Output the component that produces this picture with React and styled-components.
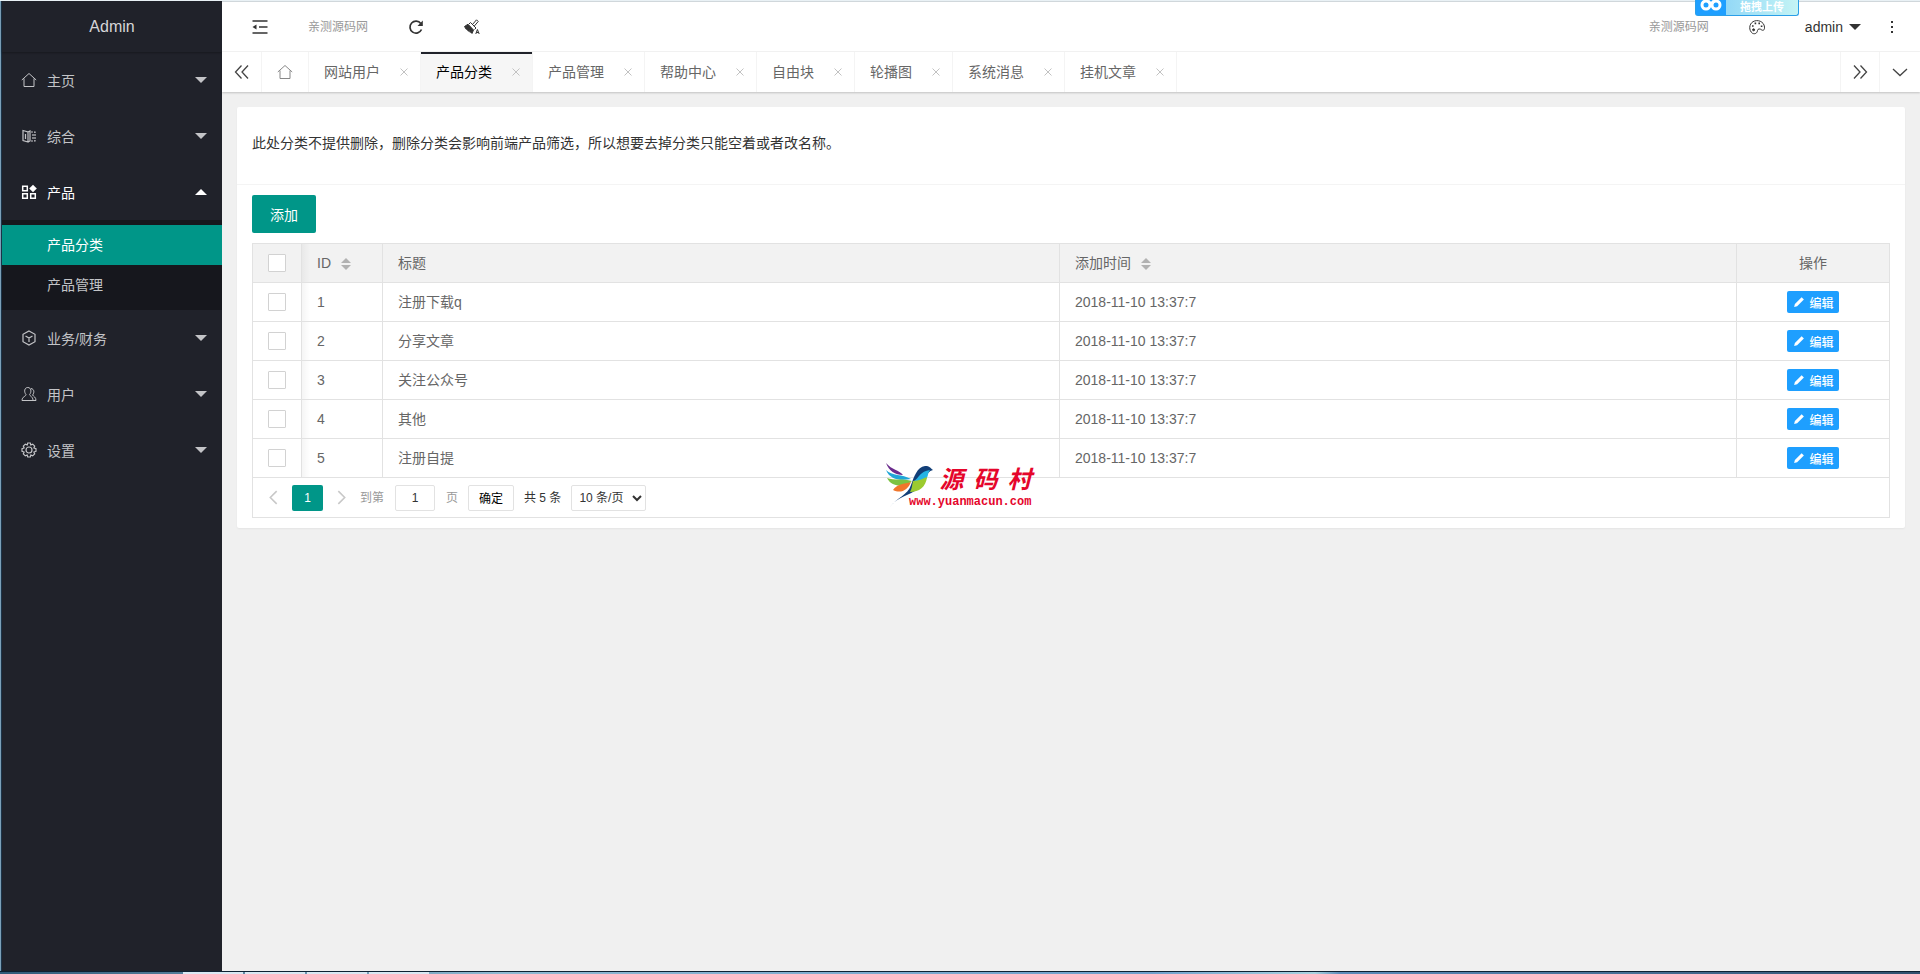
import styled, {createGlobalStyle} from "styled-components";
import {useState} from "react";

const GlobalStyle = createGlobalStyle`
    * {
      box-sizing: border-box;
    }
    body {
      margin: 0;
      background-color: #f0f0f0;
      color: #333;
      font: 14px/24px "Liberation Sans", "Noto Sans CJK SC", sans-serif;
    }
    button, input, select {
      font-family: inherit;
    }
    a {
      color: inherit;
      text-decoration: none;
    }
    ul {
      list-style: none;
      margin: 0;
      padding: 0;
    }
`

const Page = styled.div`
    display: flex;
    flex-direction: column;
    min-height: 100vh;
    border-top: 1px solid #e9f1f5;
`
const Body = styled.div`
    flex: 1;
    display: flex;
    border-left: 1px solid #7ba0b8;
`
const Side = styled.aside`
    flex: none;
    width: 221px;
    border-top: 1px solid #20222a;
    border-left: 1px solid #1b3348;
    background-color: #20222a;
    color: #c3c4c7;
`
const Logo = styled.div`
    height: 50px;
    line-height: 50px;
    font-size: 16px;
    text-align: center;
    color: #d6d6d8;
    box-shadow: 0 1px 2px rgba(0, 0, 0, .3);
`
const MenuButton = styled.button`
    display: flex;
    align-items: center;
    width: 100%;
    height: 56px;
    padding: 0 15px 0 19px;
    border: 0;
    background: none;
    color: ${(props) => props.$open ? "#fff" : "#c3c4c7"};
    font-size: 14px;
    cursor: pointer;
    svg {
      flex: none;
      margin-right: 10px;
    }
`
const Caret = styled.span`
    margin-left: auto;
    border: 6px solid transparent;
    border-width: ${(props) => props.$up ? "0 6px 6px" : "6px 6px 0"};
    border-top-color: currentColor;
    border-bottom-color: currentColor;
`
const SubMenu = styled.ul`
    padding: 5px 0;
    background-color: #16171d;
`
const SubLink = styled.a`
    display: block;
    height: 40px;
    padding-left: 45px;
    line-height: 40px;
    color: ${(props) => props.$active ? "#fff" : "#c3c4c7"};
    background-color: ${(props) => props.$active && "#009688"};
`
const Main = styled.div`
    flex: 1;
    min-width: 0;
`
const Header = styled.header`
    display: flex;
    justify-content: space-between;
    height: 51px;
    padding-left: 10px;
    border-top: 1px solid #d0d7db;
    border-bottom: 1px solid #f4f4f4;
    background-color: #fff;
`
const Tools = styled.div`
    display: flex;
    align-items: center;
`
const Tool = styled.button`
    display: flex;
    align-items: center;
    gap: 6px;
    height: 100%;
    padding: 0 ${(props) => props.$tight ? "3px" : "20px"} 0 20px;
    border: 0;
    background: none;
    color: #333;
    font-size: 14px;
    cursor: pointer;
`
const SiteLink = styled.a`
    padding: 0 20px;
    font-size: 12px;
    color: #999;
`
const TabBar = styled.nav`
    display: flex;
    height: 40px;
    background-color: #fff;
    box-shadow: 0 1px 2px rgba(0, 0, 0, .2);
`
const TabControl = styled.button`
    display: flex;
    align-items: center;
    justify-content: center;
    width: ${(props) => props.$wide ? "47px" : "40px"};
    padding: 0;
    border: 0;
    border-right: ${(props) => props.$last ? "0" : "1px solid #f4f4f4"};
    border-left: ${(props) => props.$divider ? "1px solid #f4f4f4" : "0"};
    background: none;
    color: ${(props) => props.$wide ? "#888" : "#444"};
`
const Tabs = styled.ul`
    flex: 1;
    display: flex;
`
const Tab = styled.li`
    display: flex;
    align-items: center;
    padding: 0 12px 0 15px;
    border-right: 1px solid #f4f4f4;
    color: ${(props) => props.$active ? "#000" : "#666"};
    background-color: ${(props) => props.$active && "#f6f6f6"};
    box-shadow: ${(props) => props.$active && "inset 0 2px #20222a"};
`
const Close = styled.button`
    display: flex;
    margin-left: 20px;
    padding: 0;
    border: 0;
    background: none;
    color: #c2c2c2;
`
const Card = styled.main`
    margin: 15px;
    background-color: #fff;
    border-radius: 2px;
    box-shadow: 0 1px 2px rgba(0, 0, 0, .05);
`
const Notice = styled.div`
    padding: 24px 15px 29px;
    border-bottom: 1px solid #f4f4f4;
`
const CardBody = styled.div`
    padding: 10px 15px 10px;
`
const AddButton = styled.button`
    display: block;
    height: 38px;
    margin-bottom: 10px;
    padding: 0 18px;
    border: 0;
    border-radius: 2px;
    background-color: #009688;
    color: #fff;
    font-size: 14px;
`
const TableBox = styled.div`
    border: 1px solid #e2e2e2;
`
const Table = styled.table`
    width: 100%;
    table-layout: fixed;
    border-collapse: separate;
    border-spacing: 0;
    color: #666;
    thead {
      background-color: #f2f2f2;
    }
`
const Cell = styled.td`
    width: ${(props) => props.$width};
    height: 39px;
    padding: 0 ${(props) => props.$center ? "0" : "15px"};
    border-bottom: 1px solid #e2e2e2;
    border-right: ${(props) => props.$last ? "0" : "1px solid #e2e2e2"};
    background-image: ${(props) => props.$shade && "linear-gradient(to right, rgba(0, 0, 0, .04), transparent 8px)"};
    font-weight: 400;
    line-height: 20px;
    text-align: ${(props) => props.$center ? "center" : "left"};
`
const Check = styled.input`
    appearance: none;
    display: block;
    width: 18px;
    height: 18px;
    margin: 0 auto;
    border: 1px solid #d2d2d2;
    border-radius: 1px;
    background-color: #fff;
    &:checked {
      background-color: #009688;
      border-color: #009688;
    }
`
const Sort = styled.button`
    display: inline-flex;
    flex-direction: column;
    gap: 2px;
    margin-left: 10px;
    padding: 0;
    border: 0;
    background: none;
    color: #b2b2b2;
    vertical-align: middle;
`
const SortArrow = styled.span`
    border: 5px solid transparent;
    border-width: ${(props) => props.$up ? "0 5px 5px" : "5px 5px 0"};
    border-top-color: currentColor;
    border-bottom-color: currentColor;
`
const EditButton = styled.button`
    display: inline-flex;
    align-items: center;
    gap: 4px;
    height: 22px;
    padding: 0 5px 0 6px;
    border: 0;
    border-radius: 2px;
    background-color: #1e9fff;
    color: #fff;
    font-size: 12px;
    font-weight: 500;
    vertical-align: middle;
`
const Pager = styled.div`
    display: flex;
    align-items: center;
    gap: 10px;
    height: 39px;
    padding-left: 12px;
    font-size: 12px;
    color: #333;
`
const PagerArrow = styled.button`
    display: flex;
    padding: 0;
    border: 0;
    background: none;
    color: #c8c8c8;
`
const PageNumber = styled.a`
    width: 31px;
    height: 26px;
    border-radius: 2px;
    line-height: 26px;
    text-align: center;
    background-color: #009688;
    color: #fff;
`
const Jump = styled.label`
    display: flex;
    align-items: center;
    gap: 11px;
    color: #999;
`
const PageInput = styled.input`
    width: 40px;
    height: 26px;
    border: 1px solid #e2e2e2;
    border-radius: 2px;
    font-size: 12px;
    text-align: center;
    color: #333;
`
const GoButton = styled.button`
    width: 46px;
    height: 26px;
    padding: 0;
    border: 1px solid #e2e2e2;
    border-radius: 2px;
    background-color: #fff;
    color: #000;
    font-size: 12px;
`
const Limit = styled.select`
    width: 75px;
    height: 26px;
    padding: 0 3px;
    border: 1px solid #e2e2e2;
    border-radius: 2px;
    background-color: #fff;
    color: #333;
    font-size: 12px;
`
const UploadBadge = styled.div`
    position: absolute;
    top: 0;
    right: 121px;
    display: flex;
    width: 104px;
    height: 16px;
    border: 1px solid #2b9fe8;
    border-top: 0;
    border-radius: 0 0 3px 3px;
    background: linear-gradient(to right, #7fcdf7, #c4f4f5);
    color: #fff;
    font-size: 11px;
    font-weight: 700;
    line-height: 14px;
    svg {
      flex: none;
      background-color: #1e9fff;
    }
    span {
      flex: 1;
      text-align: center;
    }
`
const Mark = styled.div`
    position: absolute;
    top: 461px;
    left: 884px;
    display: flex;
    color: #e5062b;
    pointer-events: none;
`
const MarkText = styled.div`
    display: flex;
    flex-direction: column;
    align-items: flex-end;
    margin-left: -25px;
`
const MarkName = styled.div`
    display: flex;
    gap: 10px;
    font: italic 700 24px/34px "Noto Sans CJK SC", sans-serif;
`
const MarkUrl = styled.div`
    font: 700 12px/14px "Liberation Mono", monospace;
`
const TaskBar = styled.footer`
    display: flex;
    height: 3px;
    padding-left: 183px;
    gap: 2px;
    border-top: 1px solid #0e2233;
    background: linear-gradient(to right, #2f5a78, #8fb9d2 500px, #6fa0cc 60%, #a9d3e0 1315px, #5c8cba 1340px, #31506e);
`
const Task = styled.div`
    width: 60px;
    background-color: #d9e8f3;
`

const Icon = ({size = 16, width = 1, children}) => (
    <svg width={size} height={size} viewBox="0 0 16 16" fill="none" stroke="currentColor" strokeWidth={width} aria-hidden="true">
        {children}
    </svg>
)

const HomeIcon = () => <Icon><path d="M.8 8 8 1.5 15.2 8M3 6.5V14.5H13V6.5" /></Icon>

const icons = {
    home: <HomeIcon />,
    template: <Icon width={1.2}>
        <path d="M2 2.5 7 4V14L2 12.5ZM4.500 6V11M7 4 9 3V13L7 14" />
        <path d="M10 4H14V13H10M12 6V11" strokeDasharray="2 1" />
    </Icon>,
    component: <Icon width={1.5}>
        <path d="M1.7 2.2H6.3V6.8H1.7ZM1.7 9.7H6.3V14.3H1.7ZM9.7 9.7H14.3V14.3H9.7Z" />
        <path d="M12 .8 15.8 4.5 12 8.2 8.2 4.5Z" fill="currentColor" stroke="none" />
    </Icon>,
    cube: <Icon width={1.2}><path d="M8 1 14 4.3V11.7L8 15 2 11.7V4.3ZM4.5 6 8 8 11.5 6M8 8V12" /></Icon>,
    user: <Icon>
        <path d="M5 8.5C2.8 6 3.3 1.5 6.8 1.5S10.8 6 8.6 8.5C8.6 10 12 10.5 12 14.5H1C1 10.5 5 10.5 5 8.5Z" />
        <path d="M10 2.5C13.5 3 13.5 7 11.5 9 12.5 10.5 15 11 15 14.5H12" />
    </Icon>,
    set: <Icon width={1.2}>
        <path d="M6.7 1H9.3L9.8 3 11.7 2.1 13.7 4.1 12.9 6 15 6.7V9.3L12.9 10 13.7 11.9 11.7 13.9 9.8 13 9.3 15H6.7L6.2 13 4.3 13.9 2.3 11.9 3.1 10 1 9.3V6.7L3.1 6 2.3 4.1 4.3 2.1 6.2 3Z" />
        <circle cx="8" cy="8" r="3" />
    </Icon>,
}

const menu = [
    {title: "主页", icon: "home"},
    {title: "综合", icon: "template"},
    {title: "产品", icon: "component", children: ["产品分类", "产品管理"]},
    {title: "业务/财务", icon: "cube"},
    {title: "用户", icon: "user"},
    {title: "设置", icon: "set"},
]

const tabs = ["网站用户", "产品分类", "产品管理", "帮助中心", "自由块", "轮播图", "系统消息", "挂机文章"]

const rows = [
    {id: 1, title: "注册下载q", time: "2018-11-10 13:37:7"},
    {id: 2, title: "分享文章", time: "2018-11-10 13:37:7"},
    {id: 3, title: "关注公众号", time: "2018-11-10 13:37:7"},
    {id: 4, title: "其他", time: "2018-11-10 13:37:7"},
    {id: 5, title: "注册自提", time: "2018-11-10 13:37:7"},
]

const Sidebar = () => {
    const [open, setOpen] = useState("产品")
    const [current, setCurrent] = useState("产品分类")

    return (
        <Side>
            <Logo>Admin</Logo>
            <ul>
                {menu.map((item) => (
                    <li key={item.title}>
                        <MenuButton $open={open === item.title} onClick={() => setOpen(open === item.title ? "" : item.title)}>
                            {icons[item.icon]}
                            {item.title}
                            <Caret $up={open === item.title} />
                        </MenuButton>
                        {item.children && open === item.title &&
                            <SubMenu>
                                {item.children.map((name) => (
                                    <li key={name}><SubLink href="#" $active={name === current} onClick={() => setCurrent(name)}>{name}</SubLink></li>
                                ))}
                            </SubMenu>}
                    </li>
                ))}
            </ul>
        </Side>
    )
}

const TopBar = () => (
    <Header>
        <Tools>
            <Tool aria-label="侧边伸缩">
                <Icon width={1.6}><path d="M.5 2H15.5M7 8H15.5M.5 14H15.5" /><path d="M.5 8 4.5 5.5V10.5Z" fill="currentColor" stroke="none" /></Icon>
            </Tool>
            <SiteLink href="#">亲测源码网</SiteLink>
            <Tool aria-label="刷新">
                <Icon width={1.7}><path d="M13.5 10.5A6 6 0 1 1 12.8 4.5" /><path d="M14.8 1.5V7H9.5Z" fill="currentColor" stroke="none" /></Icon>
            </Tool>
            <Tool aria-label="清除">
                <Icon>
                    <path d="M.5 7.5 4 5.2 9.5 11 8 14.5 7 12.5 6.3 13.5 5.2 11.5 4.2 12.2 3.2 10 2.2 10.3Z" fill="currentColor" />
                    <path d="M5 5 6.5 3.5 12 9 10.5 10.5M8.5 5.5 12.5 .8 14.2 2.5 10.2 7.2" />
                    <path d="M11.8 15 13.4 10.5 15.2 15M12.3 13.5H14.7" />
                </Icon>
            </Tool>
        </Tools>
        <Tools>
            <SiteLink href="#">亲测源码网</SiteLink>
            <Tool aria-label="主题">
                <Icon>
                    <path d="M3.5 14.3C-.5 11.5 0 5 4 2.7 8.5 0 15 2.5 15.5 8 15.8 10.5 14.5 12 12.8 11 11 9.5 8.8 9.5 8.5 11.5 8.3 14 6 15.5 3.5 14.3Z" />
                    <path d="M3 7H4.6M5.6 4.400H7.200M9.400 4.400H11M11.800 7.200H13.400" strokeWidth="1.6" />
                    <circle cx="4.600" cy="10.800" r="1" fill="currentColor" />
                </Icon>
            </Tool>
            <Tool $tight>admin <Caret /></Tool>
            <Tool aria-label="更多">
                <Icon><path d="M7 2H9V4H7ZM7 7H9V9H7ZM7 12H9V14H7Z" fill="currentColor" stroke="none" /></Icon>
            </Tool>
        </Tools>
    </Header>
)

const PageTabs = () => {
    const [active, setActive] = useState("产品分类")

    return (
        <TabBar>
            <TabControl aria-label="向左"><Icon width={1.3}><path d="M7.5 1.5 1.5 8 7.5 14.5M14 1.5 8 8 14 14.5" /></Icon></TabControl>
            <TabControl $wide aria-label="主页"><HomeIcon /></TabControl>
            <Tabs>
                {tabs.map((name) => (
                    <Tab key={name} $active={name === active}>
                        <a href="#" onClick={() => setActive(name)}>{name}</a>
                        <Close aria-label={"关闭" + name}><Icon size={8} width={2}><path d="M1 1 15 15M15 1 1 15" /></Icon></Close>
                    </Tab>
                ))}
            </Tabs>
            <TabControl $divider aria-label="向右"><Icon width={1.3}><path d="M2 1.5 8 8 2 14.5M8.5 1.5 14.5 8 8.5 14.5" /></Icon></TabControl>
            <TabControl $last aria-label="标签操作"><Icon width={1.3}><path d="M1 5 8 11.5 15 5" /></Icon></TabControl>
        </TabBar>
    )
}

const SortButtons = ({label}) => (
    <Sort aria-label={label}>
        <SortArrow $up />
        <SortArrow />
    </Sort>
)

const CategoryTable = () => (
    <Table>
        <thead>
            <tr>
                <Cell as="th" $width="49px" $center><Check type="checkbox" aria-label="全选" /></Cell>
                <Cell as="th" $width="81px" $shade>ID<SortButtons label="按ID排序" /></Cell>
                <Cell as="th">标题</Cell>
                <Cell as="th">添加时间<SortButtons label="按添加时间排序" /></Cell>
                <Cell as="th" $width="152px" $center $last>操作</Cell>
            </tr>
        </thead>
        <tbody>
            {rows.map((row) => (
                <tr key={row.id}>
                    <Cell $center><Check type="checkbox" aria-label={"选择" + row.title} /></Cell>
                    <Cell $shade>{row.id}</Cell>
                    <Cell>{row.title}</Cell>
                    <Cell>{row.time}</Cell>
                    <Cell $center $last>
                        <EditButton>
                            <Icon size={12}><path d="M1.5 14.5 2.5 10.5 11.5 1.5 14.5 4.5 5.5 13.5Z" fill="currentColor" stroke="none" /></Icon>
                            编辑
                        </EditButton>
                    </Cell>
                </tr>
            ))}
        </tbody>
    </Table>
)

const Pagination = () => (
    <Pager>
        <PagerArrow aria-label="上一页"><Icon size={17} width={1.5}><path d="M11 2 5 8 11 14" /></Icon></PagerArrow>
        <PageNumber href="#">1</PageNumber>
        <PagerArrow aria-label="下一页"><Icon size={17} width={1.5}><path d="M5 2 11 8 5 14" /></Icon></PagerArrow>
        <Jump>到第<PageInput type="text" defaultValue="1" />页</Jump>
        <GoButton>确定</GoButton>
        <span>共 5 条</span>
        <Limit aria-label="每页条数" defaultValue="10">
            <option value="10">10 条/页</option>
            <option value="20">20 条/页</option>
            <option value="50">50 条/页</option>
        </Limit>
    </Pager>
)

const Watermark = () => (
    <Mark>
        <svg width="50" height="48" viewBox="0 0 50 48" aria-hidden="true">
            <path d="M2 2C8 9 15 9 19 14 11 14 5 10 2 2Z" fill="#6a2a8c" />
            <path d="M2 9C8 15 18 13 27 18 17 20 6 19 2 9Z" fill="#1fa6d8" />
            <path d="M3 17C10 20 19 17 28 20 21 26 8 27 3 17Z" fill="#7cc242" />
            <path d="M9 29C13 23 20 23 27 21 24 29 17 33 9 29Z" fill="#f0762b" />
            <path d="M6 46C12 37 24 34 27 24 30 16 33 6 41 5 46 5 46 7 49 9 41 11 42 20 34 28 26 34 13 36 6 46Z" fill="#123f78" />
            <path d="M30 20C35 17 36 10 46 9 43 13 45 16 40 21Z" fill="#25b4e4" />
            <path d="M29 20C35 20 40 17 43 16 42 26 35 31 26 31 28 28 28 24 29 20Z" fill="#9ccb2f" />
        </svg>
        <MarkText>
            <MarkName><span>源</span><span>码</span><span>村</span></MarkName>
            <MarkUrl>www.yuanmacun.com</MarkUrl>
        </MarkText>
    </Mark>
)

export default function App() {
    return (
        <Page>
            <GlobalStyle />
            <Body>
                <Sidebar />
                <Main>
                    <TopBar />
                    <PageTabs />
                    <Card>
                        <Notice>此处分类不提供删除，删除分类会影响前端产品筛选，所以想要去掉分类只能空着或者改名称。</Notice>
                        <CardBody>
                            <AddButton>添加</AddButton>
                            <TableBox>
                                <CategoryTable />
                                <Pagination />
                            </TableBox>
                        </CardBody>
                    </Card>
                </Main>
            </Body>
            <TaskBar><Task /><Task /><Task /><Task /></TaskBar>
            <UploadBadge>
                <svg width="30" height="15" viewBox="0 0 30 15" fill="none" stroke="#fff" strokeWidth="3" aria-hidden="true">
                    <circle cx="10" cy="5" r="4" />
                    <circle cx="20" cy="5" r="4" />
                    <path d="M12 1 15 4 18 1" />
                </svg>
                <span>拖拽上传</span>
            </UploadBadge>
            <Watermark />
        </Page>
    )
}
